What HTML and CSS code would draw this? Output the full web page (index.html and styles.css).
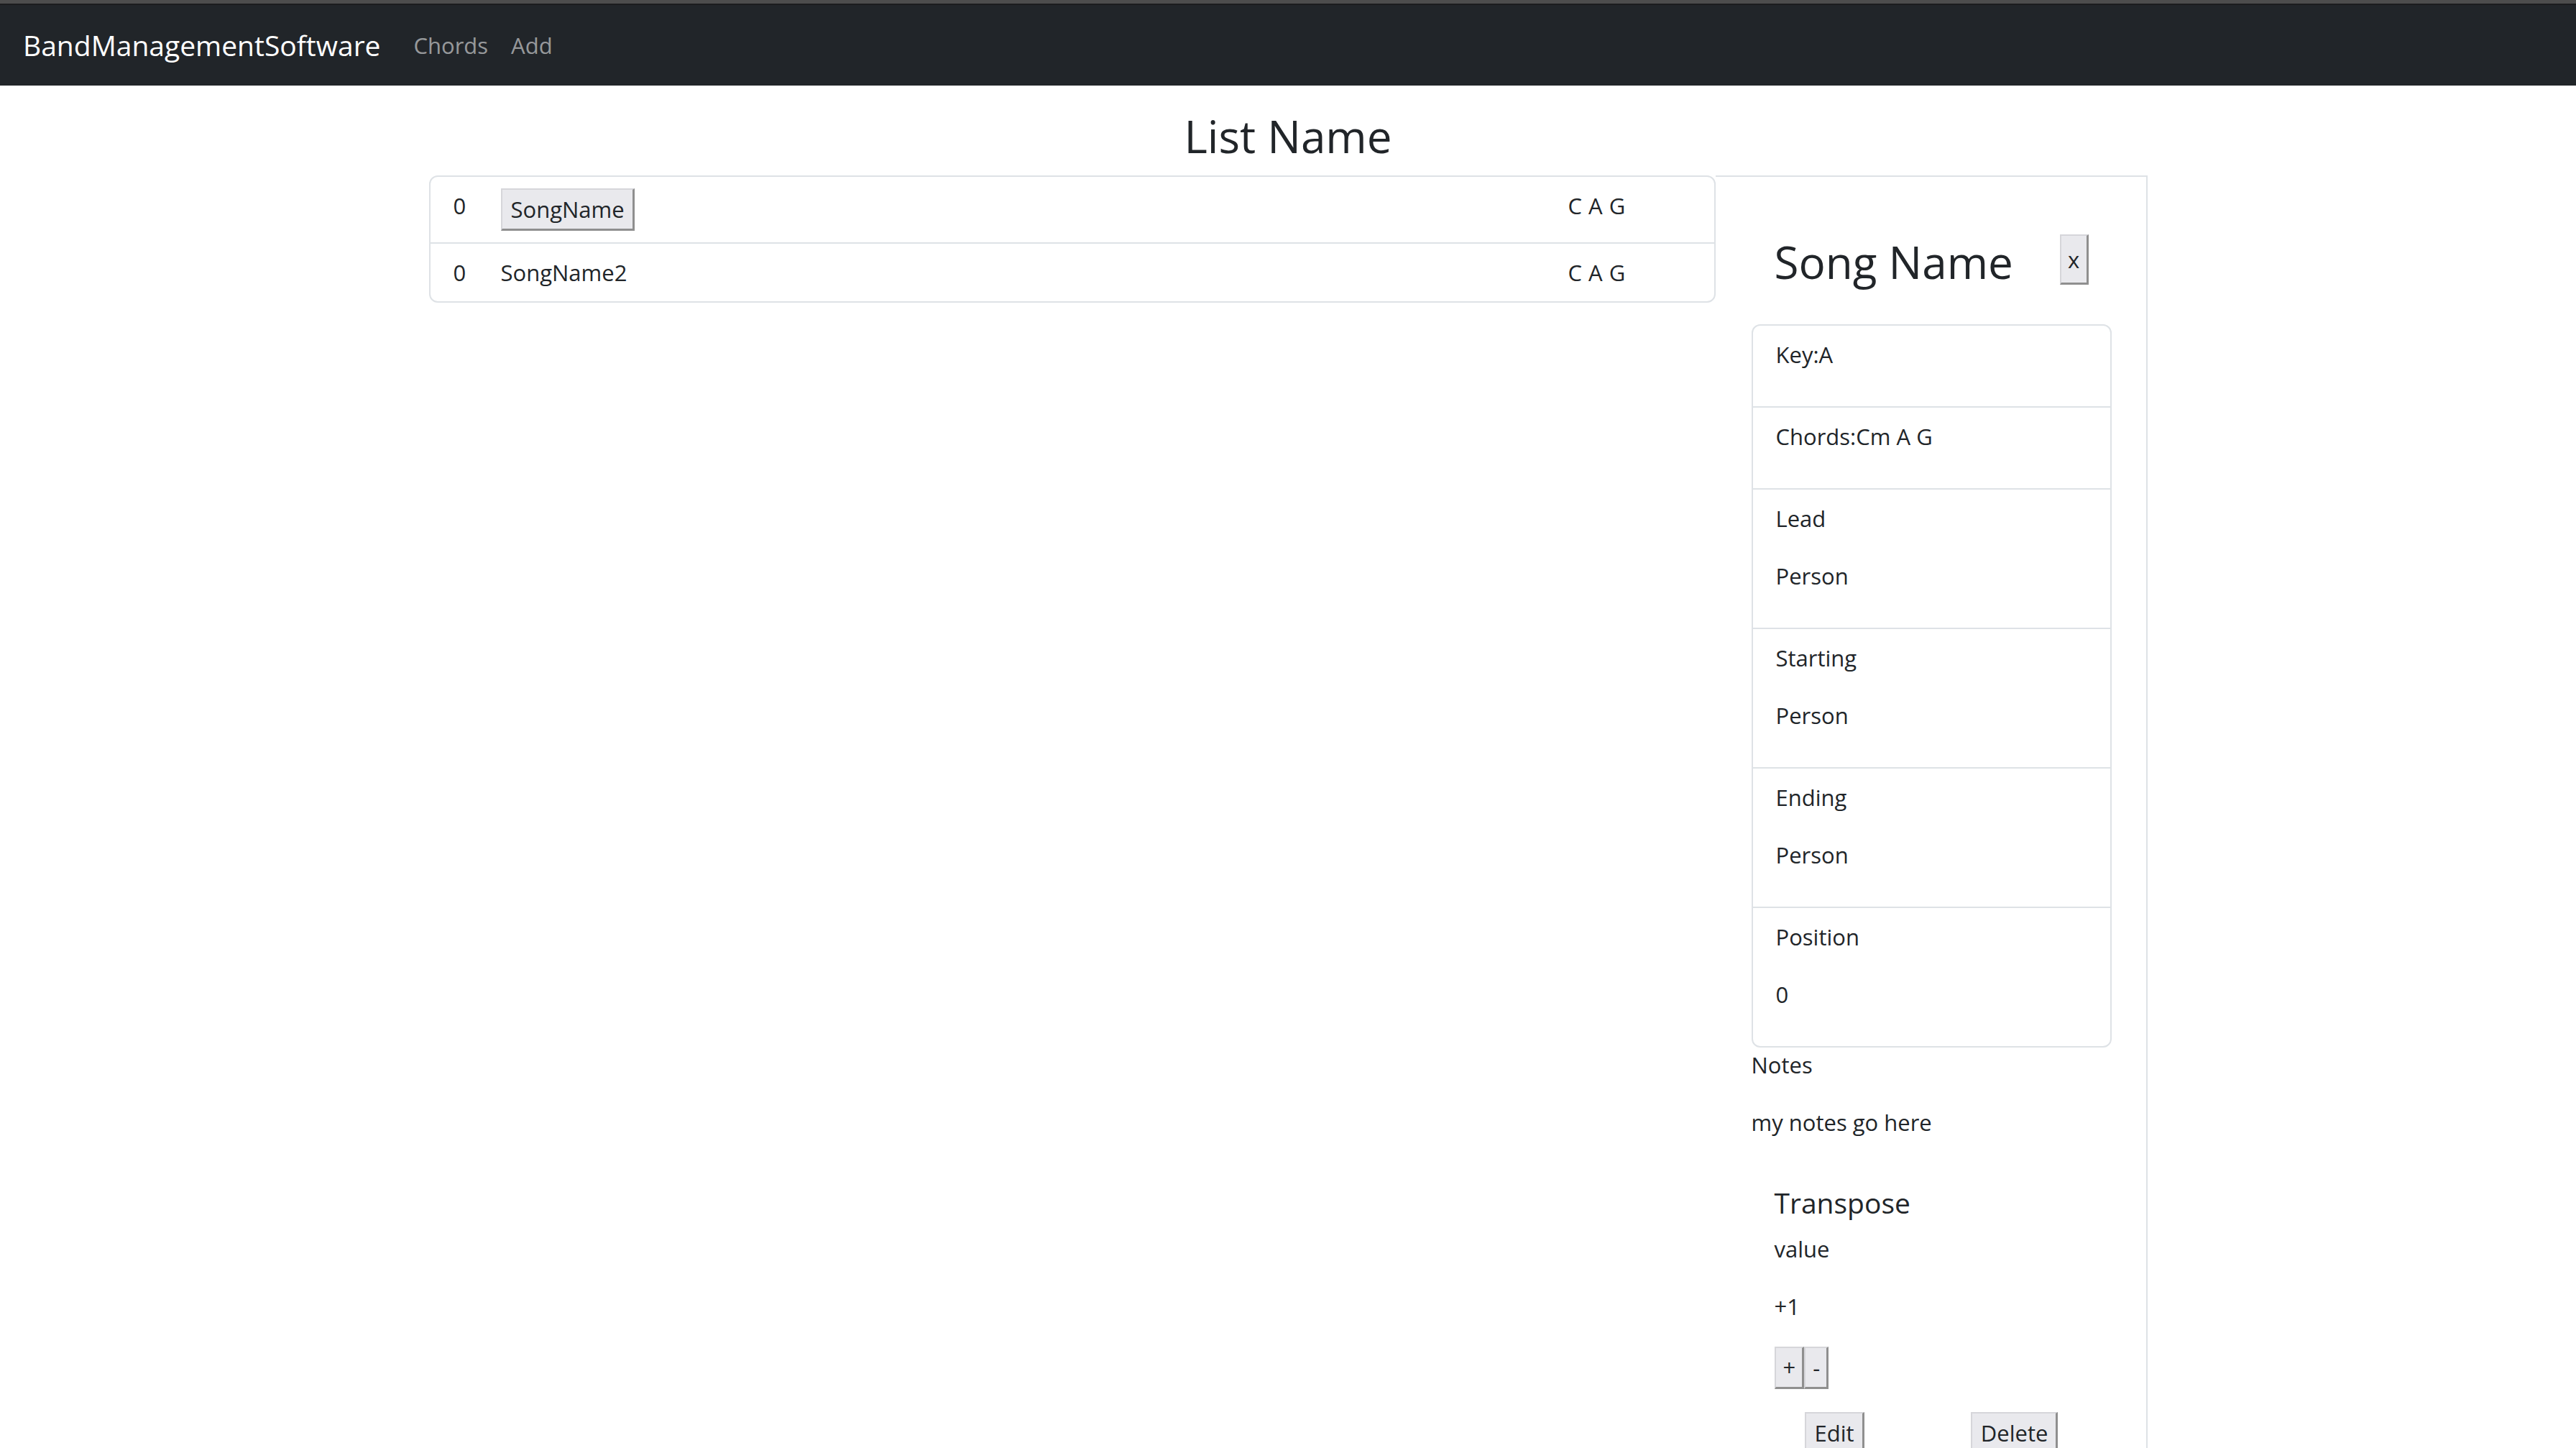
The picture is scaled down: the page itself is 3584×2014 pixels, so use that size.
FILE: index.html
```html
<!DOCTYPE html>
<html lang="en">
<head>
<meta charset="utf-8">
<title>BandManagementSoftware</title>
<link rel="stylesheet" href="styles.css">
</head>
<body>
<div class="chrome-edge"></div>
<nav class="navbar">
  <a class="brand" href="#">BandManagementSoftware</a>
  <ul class="nav">
    <li><a class="nav-link" href="#">Chords</a></li>
    <li><a class="nav-link" href="#">Add</a></li>
  </ul>
</nav>
<main class="page">
  <h2 class="list-title">List Name</h2>
  <div class="layout">
    <ul class="song-list">
      <li class="song-row">
        <span class="pos">0</span>
        <span class="name"><button class="btn" type="button">SongName</button></span>
        <span class="chords">C A G</span>
      </li>
      <li class="song-row">
        <span class="pos">0</span>
        <span class="name">SongName2</span>
        <span class="chords">C A G</span>
      </li>
    </ul>
    <aside class="detail">
      <div class="detail-head">
        <h2 class="detail-title">Song Name</h2>
        <button class="btn close" type="button">x</button>
      </div>
      <ul class="props">
        <li class="prop"><p>Key:A</p></li>
        <li class="prop"><p>Chords:Cm A G</p></li>
        <li class="prop"><p>Lead</p><p>Person</p></li>
        <li class="prop"><p>Starting</p><p>Person</p></li>
        <li class="prop"><p>Ending</p><p>Person</p></li>
        <li class="prop"><p>Position</p><p>0</p></li>
      </ul>
      <p>Notes</p>
      <p>my notes go here</p>
      <section class="transpose">
        <h5 class="transpose-title">Transpose</h5>
        <p>value</p>
        <p>+1</p>
        <div class="stepper"><button class="btn" type="button">+</button><button class="btn" type="button">-</button></div>
      </section>
      <div class="actions">
        <button class="btn" type="button">Edit</button>
        <button class="btn" type="button">Delete</button>
      </div>
    </aside>
  </div>
</main>
</body>
</html>
```
FILE: styles.css
```css
html {
  overflow: hidden;
}

body {
  margin: 0;
  font-family: "Open Sans", "Noto Sans", sans-serif;
  font-size: 31px;
  line-height: 48px;
  color: #212529;
  background: #ffffff;
}

p {
  margin: 0 0 32px;
}

ul {
  margin: 0;
  padding: 0;
  list-style: none;
}

.btn {
  font: inherit;
  line-height: 48px;
  color: #212529;
  background: #e9e9ed;
  border-style: solid;
  border-width: 2px 3px 3px 2px;
  border-color: #d6d6da #8f8f8f #8f8f8f #d6d6da;
  border-radius: 0;
  padding: 3px 11px 3px 12px;
  margin: 0;
}

/* top window edge */
.chrome-edge {
  height: 5px;
  background: #4d4d4d;
  border-bottom: 2px solid #1b1c1e;
}

/* navbar */
.navbar {
  height: 112px;
  box-sizing: border-box;
  background: #212529;
  display: flex;
  align-items: center;
  padding: 0 32px;
}

.brand {
  font-size: 39px;
  line-height: 60px;
  color: #ffffff;
  text-decoration: none;
  margin-right: 30px;
}

.nav {
  display: flex;
}

.nav-link {
  display: block;
  padding: 16px 16px;
  color: rgba(255, 255, 255, 0.55);
  text-decoration: none;
}

/* page */
.page {
  padding-top: 32px;
}

.list-title,
.detail-title {
  font-size: 62px;
  line-height: 77px;
  font-weight: 500;
  margin: 0 0 16px;
}

.list-title {
  text-align: center;
}

.layout {
  width: 2391px;
  margin: 0 auto;
  display: grid;
  grid-template-columns: 1790px 1fr;
  align-items: start;
}

/* song list */
.song-list {
  border: 2px solid #dee2e6;
  border-radius: 12px;
}

.song-row {
  display: grid;
  grid-template-columns: 66px 1485px 1fr;
  align-items: start;
  padding: 16px 32px;
}

.song-row + .song-row {
  border-top: 2px solid #dee2e6;
}

.chords {
  letter-spacing: 0.5px;
}

/* detail card */
.detail {
  border-top: 2px solid #dee2e6;
  border-right: 2px solid #dee2e6;
  padding: 48px 48px 48px 50px;
  min-height: 1800px;
}

.detail-head {
  display: flex;
  justify-content: space-between;
  align-items: flex-start;
  padding: 32px 32px;
}

.close {
  width: 40px;
  height: 70px;
  padding: 0;
  text-align: center;
}

.props {
  border: 2px solid #dee2e6;
  border-radius: 12px;
}

.prop {
  padding: 16px 32px;
}

.prop + .prop {
  border-top: 2px solid #dee2e6;
}

.transpose {
  padding: 32px;
}

.transpose-title {
  font-size: 39px;
  line-height: 48px;
  font-weight: 500;
  margin: 0 0 16px;
}

.stepper {
  display: flex;
}

.stepper .btn {
  padding: 3px 9px 3px 10px;
}

.actions {
  display: flex;
  justify-content: space-around;
}
```
